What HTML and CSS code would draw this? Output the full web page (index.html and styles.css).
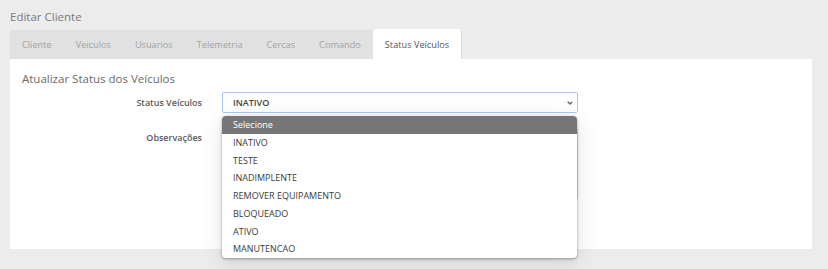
FILE: index.html
```html
<!DOCTYPE html>
<html lang="pt-BR">
<head>
<meta charset="utf-8">
<title>Editar Cliente</title>
<link rel="stylesheet" href="styles.css">
</head>
<body>
<div class="page">
  <h1 class="page-title">Editar Cliente</h1>
  <ul class="tabs">
    <li class="tab">Cliente</li>
    <li class="tab">Veiculos</li>
    <li class="tab">Usuarios</li>
    <li class="tab">Telemetria</li>
    <li class="tab">Cercas</li>
    <li class="tab">Comando</li>
    <li class="tab tab-active">Status Veículos</li>
  </ul>
  <div class="panel">
    <h2 class="panel-title">Atualizar Status dos Veículos</h2>
    <div class="form">
      <label class="form-label">Status Veículos</label>
      <div class="select-wrap">
        <div class="select">
          <span class="select-value">INATIVO</span>
          <svg class="chevron" width="6" height="4" viewBox="0 0 6 4"><polyline points="0.7,0.7 3,3 5.3,0.7" fill="none" stroke="#666" stroke-width="1.3"/></svg>
        </div>
        <ul class="dropdown">
          <li class="option option-selected">Selecione</li>
          <li class="option">INATIVO</li>
          <li class="option">TESTE</li>
          <li class="option">INADIMPLENTE</li>
          <li class="option">REMOVER EQUIPAMENTO</li>
          <li class="option">BLOQUEADO</li>
          <li class="option">ATIVO</li>
          <li class="option">MANUTENCAO</li>
        </ul>
      </div>
      <label class="form-label form-label-top">Observações</label>
      <div class="textarea"></div>
    </div>
  </div>
</div>
</body>
</html>
```
FILE: styles.css
```css
* { box-sizing: border-box; }
html, body { margin: 0; padding: 0; }
body {
  background: #ececec;
  font-family: "Open Sans", "Liberation Sans", sans-serif;
  color: #555;
  width: 828px;
  height: 269px;
  overflow: hidden;
}
.page {
  padding: 0 16px 0 10px;
}
.page-title {
  margin: 0;
  padding-top: 9px;
  height: 30px;
  font-size: 11.5px;
  line-height: 16px;
  font-weight: 400;
  color: #7a7a7a;
}
.tabs {
  list-style: none;
  margin: 0;
  padding: 0;
  display: flex;
  height: 29px;
}
.tab {
  background: #e1e1e1;
  color: #a3a3a3;
  font-size: 9.2px;
  line-height: 29px;
  padding: 0 12px;
}
.tab-active {
  background: #fff;
  color: #555;
  border-radius: 3px 3px 0 0;
  border-right: 1px solid #dcdcdc;
  margin-top: -1px;
  line-height: 31px;
  height: 30px;
}
.panel {
  background: #fff;
  height: 190px;
  padding: 12px 12px 0 12px;
}
.panel-title {
  margin: 0 0 5px 0;
  font-size: 11.5px;
  line-height: 16px;
  font-weight: 400;
  color: #6a6a6a;
}
.form {
  display: grid;
  grid-template-columns: 180px 356px;
  column-gap: 20px;
  row-gap: 15px;
}
.form-label {
  font-size: 9px;
  font-weight: 600;
  color: #5a5a5a;
  text-align: right;
  align-self: center;
}
.form-label-top {
  align-self: start;
  padding-top: 4px;
  line-height: 12px;
}
.select-wrap {
  position: relative;
}
.select {
  height: 21px;
  border: 1px solid #a9c9f3;
  border-radius: 2px;
  background: #fff;
  display: flex;
  align-items: center;
  justify-content: space-between;
  padding: 0 4px 0 10px;
  font-size: 9px;
  font-weight: 600;
  color: #444;
}
.chevron { display: block; margin-top: 1px; }
.textarea {
  height: 72px;
  border: 1px solid #d4d4d4;
  border-radius: 2px;
}
.dropdown {
  position: absolute;
  left: 0;
  top: 24px;
  width: 355px;
  margin: 0;
  padding: 0;
  list-style: none;
  background: #fff;
  border-radius: 4px;
  overflow: hidden;
  box-shadow: 0 1px 3px rgba(0,0,0,0.35), 0 4px 22px rgba(0,0,0,0.12);
  z-index: 2;
}
.option {
  height: 17.75px;
  line-height: 17.75px;
  padding-left: 11px;
  font-size: 9px;
  color: #3a3a3a;
}
.option-selected {
  background: #767676;
  color: #fff;
}
```
